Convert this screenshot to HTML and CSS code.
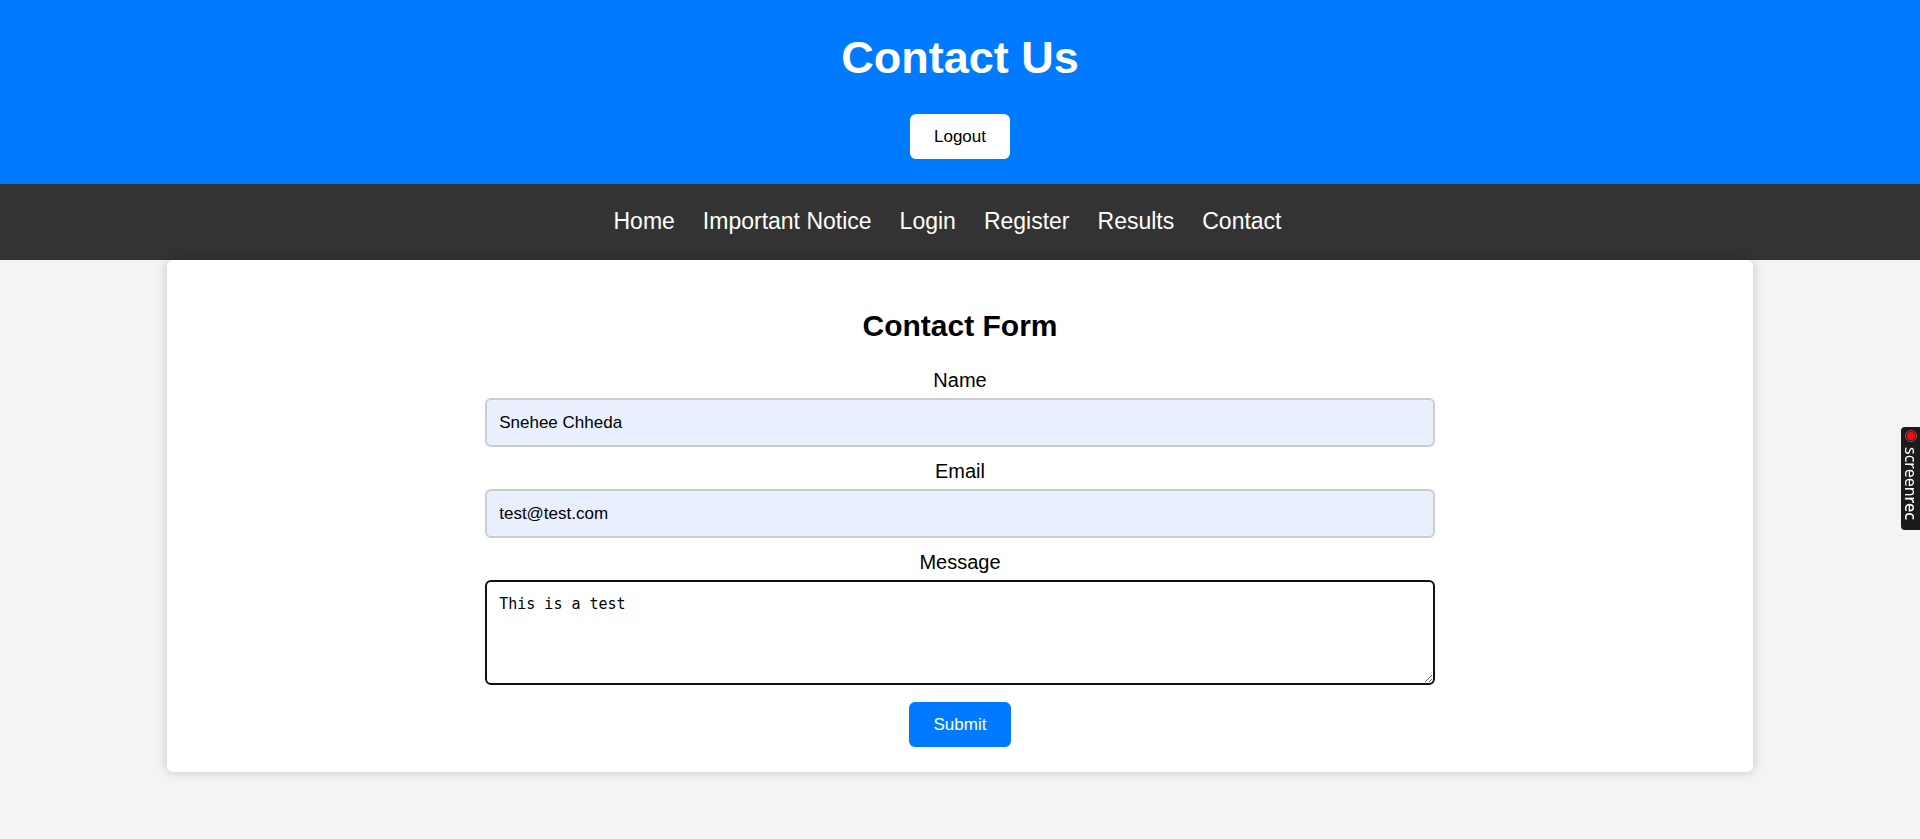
FILE: index.html
```html
<!DOCTYPE html>
<html lang="en">
<head>
<meta charset="utf-8">
<title>Contact Us</title>
<link rel="stylesheet" href="styles.css">
</head>
<body>
<header class="header">
  <h1 class="header-title">Contact Us</h1>
  <button class="button button-light" type="button">Logout</button>
</header>
<nav class="nav">
  <ul class="nav-list">
    <li><a href="#">Home</a></li>
    <li><a href="#">Important Notice</a></li>
    <li><a href="#">Login</a></li>
    <li><a href="#">Register</a></li>
    <li><a href="#">Results</a></li>
    <li><a href="#">Contact</a></li>
  </ul>
</nav>
<main class="card">
  <h2 class="card-title">Contact Form</h2>
  <form class="form">
    <label for="name">Name</label>
    <input class="field" id="name" type="text" value="Snehee Chheda">
    <label for="email">Email</label>
    <input class="field" id="email" type="email" value="test@test.com">
    <label for="message">Message</label>
    <textarea class="field message" id="message" spellcheck="false">This is a test</textarea>
    <button class="button button-primary" type="submit">Submit</button>
  </form>
</main>
<aside class="recorder">
  <svg class="recorder-dot" viewBox="0 0 14 14" aria-hidden="true">
    <circle cx="7" cy="7" r="5.6" fill="none" stroke="#a04a4a" stroke-width="1"/>
    <circle cx="7" cy="7" r="4.2" fill="#ff0808"/>
  </svg>
  <span class="recorder-name">screen<b>rec</b></span>
</aside>
</body>
</html>
```

FILE: styles.css
```css
* {
  box-sizing: border-box;
}

body {
  min-height: 100vh;
  margin: 0;
  background: #f4f4f4;
  color: #000;
  font-family: Arial, "Liberation Sans", sans-serif;
  font-size: 20px;
}

.header {
  padding: 26px 25px 25px;
  background: #007bff;
  color: #fff;
  text-align: center;
}

.header-title {
  margin: 0 0 24px;
  font-size: 45px;
  line-height: 64px;
}

.button {
  display: block;
  margin: 0 auto;
  padding: 12px 24px;
  border: 0;
  border-radius: 6px;
  font-family: inherit;
  font-size: 17px;
  line-height: 21px;
  cursor: pointer;
}

.button-light {
  background: #fff;
  color: #000;
}

.button-primary {
  margin-top: 5px;
  padding: 12px 25px;
  background: #007bff;
  color: #fff;
}

.nav {
  padding: 24px 25px 26px;
  background: #333;
}

.nav-list {
  display: flex;
  justify-content: center;
  gap: 28px;
  margin: 0;
  padding: 0 25px 0 0;
  list-style: none;
  font-size: 23px;
  line-height: 26px;
}

.nav-list a {
  color: #fff;
  text-decoration: none;
}

.card {
  width: calc(80% + 50px);
  margin: 0 auto;
  padding: 49px 25px 25px;
  border-radius: 6px;
  background: #fff;
  box-shadow: 0 0 12px rgba(0, 0, 0, 0.2);
}

.card-title {
  margin: 0 0 25px;
  font-size: 30px;
  line-height: 34px;
  text-align: center;
}

.form {
  display: flex;
  flex-direction: column;
  align-items: center;
  width: calc(60% + 28px);
  margin: 0 auto;
}

.form label {
  margin-bottom: 6px;
  line-height: 24px;
}

.field {
  display: block;
  width: 100%;
  height: 49px;
  margin-bottom: 12px;
  padding: 12px;
  border: 2px solid #ccc;
  border-radius: 6px;
  outline: 0;
  background: #e8f0fe;
  color: #000;
  font-family: inherit;
  font-size: 17px;
}

.message {
  height: 105px;
  border-color: #101010;
  background: #fff;
  font-family: "DejaVu Sans Mono", monospace;
  font-size: 15px;
  line-height: 20px;
  resize: vertical;
}

.recorder {
  position: fixed;
  top: 427px;
  right: 0;
  display: flex;
  flex-direction: column;
  align-items: center;
  gap: 4px;
  width: 19px;
  height: 103px;
  padding-top: 2px;
  border-radius: 4px 0 0 4px;
  background: #1b1b1b;
  color: #fff;
}

.recorder-dot {
  flex: none;
  width: 14px;
  height: 14px;
}

.recorder-name {
  writing-mode: vertical-rl;
  font-family: "Noto Sans", sans-serif;
  font-size: 16px;
  line-height: 17px;
}

.recorder-name b {
  font-weight: 500;
}
```
